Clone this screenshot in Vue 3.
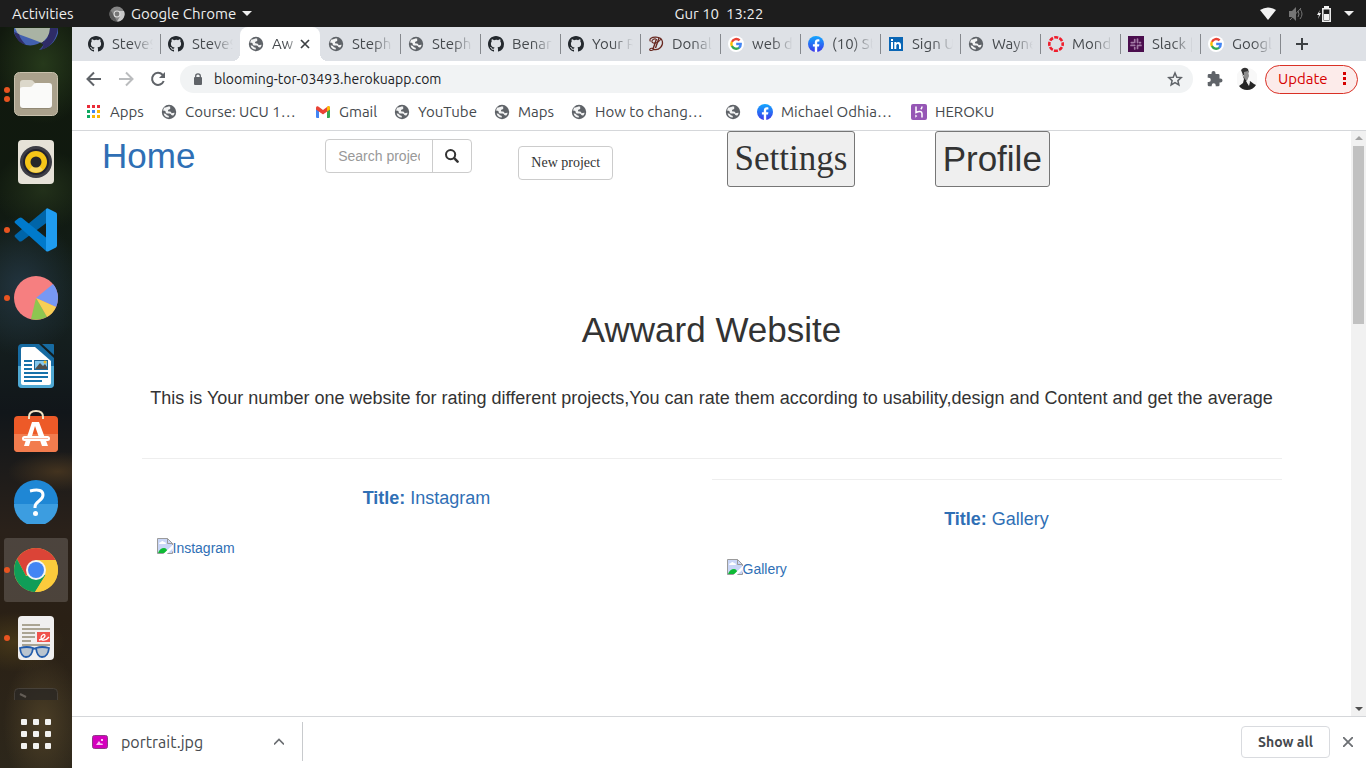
<script setup>
const tabs = [
  { icon: 'github', title: 'Steve9' },
  { icon: 'github', title: 'Steve9' },
  { icon: 'globe', title: 'Aw', active: true },
  { icon: 'globe', title: 'Steph' },
  { icon: 'globe', title: 'Steph' },
  { icon: 'github', title: 'Benar' },
  { icon: 'github', title: 'Your R' },
  { icon: 'script', title: 'Donal' },
  { icon: 'google', title: 'web d' },
  { icon: 'facebook', title: '(10) St' },
  { icon: 'linkedin', title: 'Sign U' },
  { icon: 'globe', title: 'Wayne' },
  { icon: 'canvas', title: 'Mond' },
  { icon: 'slack', title: 'Slack |' },
  { icon: 'google', title: 'Googl' },
]
const bookmarks = [
  { icon: 'apps', title: 'Apps' },
  { icon: 'globe', title: 'Course: UCU 1…' },
  { icon: 'gmail', title: 'Gmail' },
  { icon: 'globe', title: 'YouTube' },
  { icon: 'globe', title: 'Maps' },
  { icon: 'globe', title: 'How to chang…' },
  { icon: 'globe', title: '' },
  { icon: 'facebook', title: 'Michael Odhia…' },
  { icon: 'heroku', title: 'HEROKU' },
]
const launchers = [
  { icon: 'files', label: 'Files', dots: 2 },
  { icon: 'music', label: 'Music', dots: 0 },
  { icon: 'code', label: 'Code editor', dots: 1 },
  { icon: 'pie', label: 'Disk usage', dots: 1 },
  { icon: 'writer', label: 'Writer', dots: 0 },
  { icon: 'store', label: 'Software', dots: 0 },
  { icon: 'help', label: 'Help', dots: 0 },
  { icon: 'chrome', label: 'Google Chrome', dots: 1, active: true },
  { icon: 'viewer', label: 'Document viewer', dots: 1 },
]
const projects = [{ name: 'Instagram' }, { name: 'Gallery' }]
</script>

<template>
  <svg class="sprite" aria-hidden="true">
    <symbol id="github" viewBox="0 0 16 16"><path fill="#24292e" d="M8 0C3.58 0 0 3.58 0 8c0 3.54 2.29 6.53 5.47 7.59.4.07.55-.17.55-.38 0-.19-.01-.82-.01-1.49-2.01.37-2.53-.49-2.69-.94-.09-.23-.48-.94-.82-1.13-.28-.15-.68-.52-.01-.53.63-.01 1.08.58 1.23.82.72 1.21 1.87.87 2.33.66.07-.52.28-.87.51-1.07-1.78-.2-3.64-.89-3.64-3.95 0-.87.31-1.59.82-2.15-.08-.2-.36-1.02.08-2.12 0 0 .67-.21 2.2.82A7.6 7.6 0 0 1 8 3.86c.68 0 1.36.09 2 .27 1.53-1.04 2.2-.82 2.2-.82.44 1.1.16 1.92.08 2.12.51.56.82 1.27.82 2.15 0 3.07-1.87 3.75-3.65 3.95.29.25.54.73.54 1.48 0 1.07-.01 1.93-.01 2.2 0 .21.15.46.55.38A8.01 8.01 0 0 0 16 8c0-4.42-3.58-8-8-8z" /></symbol>
    <symbol id="globe" viewBox="0 0 16 16"><circle cx="8" cy="8" r="7.2" fill="#5f6368" /><path fill="#fff" fill-opacity=".92" d="M9.2 2.5c-.2 1.300.3 1.700 0 2.300-.5.800-2 .7-2.200 1.600-.1.700.3 1.100 1.300 1.100 1.300 0 2.200.7 2.200 1.700 1.100 0 1.800-.5 3.100-.4-.3 1.300-.8 2.200-1.700 3-.6-.8-1.600-.5-1.900-1.300-.3-.7-1-.9-2-.9H6.600c-1.300 0-2-.9-2-1.900 0-.6-.8-.9-1.300-.9H2.300c-.1-1.200.3-2.500 1.100-3.400.7.300 1.800.2 2.500-.3.700-.6 1-.9 3.300-.6zM2.600 9.500c1.300 0 2.600.3 2.900 1.300.4 1 2.200.5 2.300 1.500v1.300C5.200 13.700 3.200 12.200 2.600 9.500z" /></symbol>
    <symbol id="script" viewBox="0 0 16 16"><g fill="none" stroke="#682820"><path stroke-width="1.400" d="M8.500 3 5 13M11 2 7.500 12" /><path stroke-width="1.200" d="M2.500 5.500C.5 2.500 4 1 8 1.200c8 .3 7.500 7.500 4.500 10.300-3 3-6.500 2.600-8 .9-1.300-.4-2.800.1-2.800 1.200 0 1.500 3 1 4.300-.5M8 3C5 2 2 6 5.500 7c3 1 6-2 8-4.500" /></g></symbol>
    <symbol id="google" viewBox="0 0 16 16"><circle cx="8" cy="8" r="8" fill="#fff" /><g fill="none" stroke-width="2.400"><path stroke="#ea4335" d="M3.900 5.900a4.700 4.700 0 0 1 7.700-1.500" /><path stroke="#fbbc05" d="M3.900 10.200a4.700 4.700 0 0 1 0-4.400" /><path stroke="#34a853" d="M3.900 10.100a4.700 4.700 0 0 0 7.300 1.500" /><path stroke="#4285f4" d="M11 11.800A4.700 4.700 0 0 0 12.700 8H8.200" /></g></symbol>
    <symbol id="facebook" viewBox="0 0 16 16"><linearGradient id="fb" x2="0" y2="1"><stop stop-color="#13a7ff" /><stop offset="1" stop-color="#3d38e9" /></linearGradient><circle cx="8" cy="8" r="8" fill="url(#fb)" /><path fill="#fff" d="M6.800 16v-5.400H4.900V8.200h1.900V6.600c0-2.200 1.200-3.400 3-3.400.7 0 1.400.1 1.600.2v2h-1c-1 0-1.200.5-1.200 1.200v1.600h2.200l-.4 2.400H9.200V16z" /></symbol>
    <symbol id="linkedin" viewBox="0 0 16 16"><path fill="#0a66b5" d="M1 1h14v14H1z" /><path fill="#fff" d="M3 6h2v7H3zM3 3h2v2H3zM6.300 6h2v1c1.100-1.700 4.700-1.400 4.700 2v4h-2V9.500c0-2.300-2.700-2-2.700 0V13h-2z" /></symbol>
    <symbol id="canvas" viewBox="0 0 16 16"><circle cx="8" cy="8" r="6.700" fill="none" stroke="#ef1d2c" stroke-width="2.600" stroke-dasharray="4 1.262" stroke-dashoffset="2" /></symbol>
    <symbol id="slack" viewBox="0 0 16 16"><path fill="#4a0d4d" d="M0 0h16v16H0z" /><g stroke="#a27aa5" stroke-width="1.700" stroke-linecap="round"><path d="M6.700 3.500v3M3.300 6.600h2M9.500 3v3.600M12.500 6.600h-1M3 9.400h3.700M6.700 11.500v1.500M9.500 9.400v3M11 9.400h2" /></g></symbol>
    <symbol id="apps" viewBox="0 0 16 16"><path fill="#ea2b38" d="M1 1h3v3H1zM6 1h3v3H6zM11 1h3v3h-3z" /><path fill="#0da960" d="M1 6h3v3H1zM1 11h3v3H1z" /><path fill="#4285f4" d="M6 6h3v3H6z" /><path fill="#fbb605" d="M11 6h3v3h-3zM6 11h3v3H6zM11 11h3v3h-3z" /></symbol>
    <symbol id="gmail" viewBox="0 0 16 16"><path fill="#4285f4" d="M1 4h3v10H2q-1 0-1-1z" /><path fill="#34a853" d="M12 4h3v9q0 1-1 1h-2z" /><path fill="#ea4335" d="M1 4c0-2 2-2 3-1l4 3 4-3c1-1 3-1 3 1v1.500l-7 5-7-5z" /><path fill="#fbbc04" d="m12 3 1-.7c1-.6 2 .3 2 1.700v1.500l-3 2z" /><path fill="#fff" d="m4 8 4 3 4-3v6H4z" /></symbol>
    <symbol id="heroku" viewBox="0 0 16 16"><rect width="16" height="16" rx="2" fill="#9556b5" /><path fill="none" stroke="#fff" stroke-width="1.500" d="M5 2.500v6c3-1.500 6-1.500 6 1v4M11 2.500c0 1.200-.5 2-1.200 2.700" /><path fill="#fff" d="m4.300 10.500 2 1.500-2 1.800z" /></symbol>

    <symbol id="files" viewBox="0 0 44 44"><rect x=".5" y=".5" width="43" height="43" rx="5" fill="#aaa18c" stroke="#c9c1ad" /><path fill="#dcd8cb" d="M6 11q0-3 3-3h8q2 0 3 2l2 2v6H6z" /><path fill="#776f5d" opacity=".5" d="M6 33q0 4 4 4h24q4 0 4-4z" /><path fill="#fafaf9" d="M6 17q0-2 3-2h7q2 0 3-2 1-2 3-2h13q3 0 3 3v19q0 3-3 3H9q-3 0-3-3z" /></symbol>
    <symbol id="music" viewBox="0 0 44 44"><rect x="4" width="36" height="44" rx="4" fill="#e6e2d8" /><circle cx="22" cy="22" r="16" fill="#3d3d45" /><circle cx="22" cy="22" r="13" fill="#22222e" /><circle cx="22" cy="22" r="11" fill="#f5c518" /><path fill="#fff" opacity=".3" d="m22 22-7 8a11 11 0 0 0 14 0z" /><circle cx="22" cy="22" r="5.500" fill="#26262a" /></symbol>
    <symbol id="code" viewBox="0 0 44 44"><path fill="#0065a9" d="M1 27 32 1l3 12L8 33q-2 1-3 0l-4-4q-1-1 0-2z" /><path fill="#007acc" d="M1 15q-1-1 0-2l4-3q2-1 3 0l27 22-3 11z" /><path fill="#1f9cf0" d="M32 1q1-1 2-.6l8 4q1 .6 1 2v31q0 1-1 2l-8 4q-1 .4-2-.4V1z" /></symbol>
    <symbol id="pie" viewBox="0 0 44 44"><circle cx="22" cy="22" r="22" fill="#f67f80" /><path fill="#7798f4" d="M22 22 39 8a22 22 0 0 1 3 23z" /><path fill="#f7cf55" d="m22 22 20 9q-3 7-9 10z" /><path fill="#8dc650" d="m22 22 11 19q-8 4-16 2z" /></symbol>
    <symbol id="writer" viewBox="0 0 44 44"><path fill="#176ba2" d="M8 0h17l15 14v26q0 4-4 4H8q-4 0-4-4V4q0-4 4-4z" /><path fill="#4fa8d3" d="M4 22h36v18q0 4-4 4H8q-4 0-4-4z" /><path fill="#fff" d="M9 3h12l16 14v22q0 2-2 2H9q-2 0-2-2V5q0-2 2-2z" /><path fill="#176ba2" d="M28 0h11q1 0 1 1v10z" /><g fill="#1772aa"><path d="M10 16h8v2h-8zM10 20h8v2h-8zM10 24h8v2h-8zM10 28h24v2H10zM10 32h24v2H10zM10 36h18v2H10z" /></g><path fill="#1c6696" d="M20 16h14v10H20z" /><path fill="#83c7ed" d="M21 17h12v8H21z" /><path fill="#514f4b" d="m21 25 5-6 3 3 2-2 2 3v2z" /><circle cx="31" cy="18" r="1.500" fill="#edba28" /></symbol>
    <symbol id="store" viewBox="0 0 44 44" overflow="visible"><rect y="4" width="44" height="36" rx="4" fill="#ed5a28" /><path fill="#f27c4e" d="M0 22h44v14q0 4-4 4H4q-4 0-4-4z" /><path fill="none" stroke="#f2e3c4" stroke-width="2" d="M15 7V5Q15-1 22-1t7 6v2" /><path fill="#fff" d="M18 10h7l9 24h-6l-7-20-6 20h-5z" /><path stroke="#fff" stroke-width="5" stroke-linecap="round" d="M10.500 26.500h23" /><path stroke="#f8b9a4" d="M10 26.500h24" /></symbol>
    <symbol id="help" viewBox="0 0 44 44"><circle cx="22" cy="22" r="22" fill="#1f87d5" /><path fill="#3c9de0" d="M0 24h44a22 22 0 0 1-44 0z" /><path fill="none" stroke="#fff" stroke-width="3" d="M16 11q13-3 13 4c0 6-8 6-8 12v1" /><circle cx="21.500" cy="33.500" r="2.500" fill="#fff" /></symbol>
    <symbol id="chrome" viewBox="0 0 44 44"><circle cx="22" cy="22" r="22" fill="#fbcb3c" /><path fill="#db4437" d="M3 11a22 22 0 0 1 38 0v1H22L12 28z" /><path fill="#109d58" d="M3 11a22 22 0 0 0 18 33l11-17-10-1-10 2z" /><path fill="#fbcb3c" d="M22 12h19.500A22 22 0 0 1 21 44l11-18z" /><circle cx="22" cy="22" r="10" fill="#f4f4f4" /><circle cx="22" cy="22" r="8" fill="#4285f4" /></symbol>
    <symbol id="viewer" viewBox="0 0 44 44"><rect x="4" width="36" height="44" rx="4" fill="#f0efef" /><path fill="#aaa493" d="M8 8h18v2H8zM8 12h28v2H8zM8 16h13v2H8zM8 20h13v2H8zM8 24h9v2H8zM8 28h28v2H8z" /><path fill="#ef524c" d="M23 16h13v10H23z" /><path fill="none" stroke="#fff" stroke-width="1.300" d="M25 24q5-1 6-4c0-3-4-1-4 2s5 3 8-1" /><g fill="#b9c4cf" stroke="#235cab" stroke-width="1.800"><path d="M6 32q7-2 13 0-1 9-7 9-5 0-6-9zM22 32q6-2 13 0-1 9-7 9-5 0-6-9z" /></g><path fill="none" stroke="#235cab" stroke-width="1.800" d="M19 33q1.500-1 3 0" /></symbol>
    <symbol id="mail" viewBox="0 0 44 44"><path fill="#4260b0" d="M-2 21h47q-2 18-20 22 6-5 5-10-8 7-18 5Q2 34-2 21z" /><path fill="#a9b3a4" d="M1 21h38q-3 7-11 15-10-4-24-9z" /><path fill="#2e2c66" d="M0 25q3 11 12 13-6-6-7-11zM36 21q-1 12-9 15 5 2-1 7 15-3 18-22z" /></symbol>
    <symbol id="terminal" viewBox="0 0 44 44"><rect x=".5" y=".5" width="43" height="43" rx="4" fill="#292725" stroke="#4d4945" /><path fill="none" stroke="#77726f" stroke-width="2" d="m6 6 6 3" /></symbol>
  </svg>

  <div class="desktop">
    <header class="topbar">
      <button class="activities">Activities</button>
      <button class="app-menu">
        <svg class="i16" viewBox="0 0 16 16"><circle cx="8" cy="8" r="7.500" fill="#858585" /><path fill="#c9c9c9" d="M8 5h7A7.500 7.500 0 0 1 8 15.500l3-5z" /><path fill="#5c5c5c" d="m1.500 4 4 6.500L8 15.500A7.500 7.500 0 0 1 1.500 4z" /><circle cx="8" cy="8" r="3.500" fill="#ddd" /><circle cx="8" cy="8" r="2.400" fill="#777" /></svg>
        Google Chrome
        <i class="caret"></i>
      </button>
      <time class="clock">Gur 10&nbsp; 13:22</time>
      <button class="status" aria-label="System menu">
        <svg class="i16" viewBox="0 0 16 16"><path fill="#f2f2f2" d="M0 4Q8-1 16 4L8 14z" /></svg>
        <svg class="i16" viewBox="0 0 16 16"><path fill="#757575" d="M1 5h3l4-4v14l-4-4H1z" /><path fill="none" stroke="#757575" d="m2 14 11-12M10 5q2 3 0 6M12 3q4 5 0 10" /></svg>
        <svg class="i16" viewBox="0 0 16 16"><path fill="#f2f2f2" d="M4 4 1 9h2l-1 4 3-6H3z" /><path fill="none" stroke="#f2f2f2" stroke-width="1.500" d="M6.800 2.800h7.400v12.400H6.800z" /><path fill="#f2f2f2" d="M8 0h5v2H8zM8 8h5v6H8z" /></svg>
        <i class="caret"></i>
      </button>
    </header>

    <nav class="dock" aria-label="Launcher">
      <button class="launcher first" aria-label="Mail"><svg class="i44"><use href="#mail" /></svg></button>
      <button v-for="l in launchers" :key="l.icon" class="launcher" :class="{ active: l.active }" :aria-label="l.label">
        <span class="dots"><i v-for="n in l.dots" :key="n"></i></span>
        <svg class="i44"><use :href="'#' + l.icon" /></svg>
      </button>
      <button class="launcher last" aria-label="Terminal"><svg class="i44"><use href="#terminal" /></svg></button>
      <button class="all-apps" aria-label="Show applications"><i v-for="n in 9" :key="n"></i></button>
    </nav>

    <section class="browser">
      <div class="tabs">
        <div v-for="(t, n) in tabs" :key="n" class="tab" :class="{ active: t.active }">
          <button class="tab-main">
            <svg class="i16"><use :href="'#' + t.icon" /></svg>
            <span class="tab-title">{{ t.title }}</span>
          </button>
          <button v-if="t.active" class="tab-close" aria-label="Close tab"><svg class="i10" viewBox="0 0 10 10"><path stroke="#3c4043" stroke-width="1.700" d="m1 1 8 8M9 1 1 9" /></svg></button>
        </div>
        <button class="new-tab" aria-label="New tab"><svg class="i12" viewBox="0 0 12 12"><path stroke="#3c4043" stroke-width="2" d="M6 0v12M0 6h12" /></svg></button>
      </div>

      <div class="toolbar">
        <button aria-label="Back"><svg class="i16" viewBox="0 0 16 16"><path fill="none" stroke="#5f6368" stroke-width="2" d="M15 8H2M8 1.500 1.500 8 8 14.500" /></svg></button>
        <button aria-label="Forward"><svg class="i16" viewBox="0 0 16 16"><path fill="none" stroke="#babcbe" stroke-width="2" d="M1 8h13M8 1.500 14.500 8 8 14.500" /></svg></button>
        <button aria-label="Reload"><svg class="i16" viewBox="0 0 16 16"><path fill="none" stroke="#5f6368" stroke-width="2" d="M13.700 10A6 6 0 1 1 12.500 3.800L14 5.500" /><path fill="#5f6368" d="M15 1v6H9z" /></svg></button>
        <div class="omnibox">
          <svg class="i12" viewBox="0 0 12 12"><path fill="#5f6368" d="M3 4h6q1 0 1 1v6q0 1-1 1H3q-1 0-1-1V5q0-1 1-1z" /><path fill="none" stroke="#5f6368" stroke-width="1.300" d="M3.700 5V3Q3.700.8 6 .8T8.300 3v2" /></svg>
          <input aria-label="Address" value="blooming-tor-03493.herokuapp.com">
          <button aria-label="Bookmark this page"><svg class="i16" viewBox="0 0 16 16"><path fill="none" stroke="#5f6368" stroke-width="1.500" d="m8 2 1.800 4.200 4.500.4-3.400 3 1 4.400L8 11.700 4.100 14l1-4.400-3.400-3 4.500-.4z" /></svg></button>
        </div>
        <button aria-label="Extensions"><svg class="i16" viewBox="0 0 16 16"><path fill="#5f6368" d="M13.500 7.500h-1V4.300q0-1.300-1.300-1.300H8.500V2a2 2 0 0 0-4 0v1H2Q.7 3 .7 4.300v2.500h1a2 2 0 0 1 0 4.200h-1v3q0 1.300 1.300 1.300h2.700v-1a2 2 0 0 1 4 0v1h2.500q1.300 0 1.300-1.300v-2.500h1a2 2 0 0 0 0-4z" /></svg></button>
        <button class="avatar" aria-label="Profile"><svg class="i20" viewBox="0 0 20 24"><circle cx="10" cy="12" r="11" fill="#f8f8f8" /><path fill="#333" d="M4 3q3-4 7-1l1 4-1-1-2 1-1 3-2-1z" /><path fill="#8e8e8e" d="m7 5 4-1 1 5-2 5-3-3z" /><path fill="#262626" d="m5 7 3 5 2 2 1 3 2-3 4 3 2 1q-3 5-9 5-5 0-8-4l4-3 1-4z" /><path fill="#eee" d="m9 14 3 5 1-4-2-2z" /></svg></button>
        <button class="update">Update <svg viewBox="0 0 4 14" class="kebab"><path fill="#d60000" d="M0 0h3v3H0zM0 5h3v3H0zM0 10h3v3H0z" /></svg></button>
      </div>

      <nav class="bookmarks" aria-label="Bookmarks">
        <a v-for="(b, n) in bookmarks" :key="n" href="#" :aria-label="b.title || 'Untitled'"><svg class="i16"><use :href="'#' + b.icon" /></svg>{{ b.title }}</a>
      </nav>

      <div class="viewport">
        <main class="page">
          <div class="menu">
            <div><a class="home" href="#">Home</a></div>
            <div class="search-cell">
              <form class="search" @submit.prevent>
                <input aria-label="Search projects" placeholder="Search projects">
                <button aria-label="Search"><svg class="i14" viewBox="0 0 14 14"><circle cx="5.600" cy="5.600" r="4.600" fill="none" stroke="#333" stroke-width="2" /><path stroke="#333" stroke-width="2.500" stroke-linecap="round" d="m9.400 9.400 3.200 3.200" /></svg></button>
              </form>
            </div>
            <div><button class="new-project">New project</button></div>
            <div><button class="big serif">Settings</button></div>
            <div><button class="big">Profile</button></div>
          </div>
          <div class="container">
            <h1>Awward Website</h1>
            <p class="intro">This is Your number one website for rating different projects,You can rate them according to usability,design and Content and get the average</p>
            <hr>
            <div class="projects">
              <article v-for="(p, n) in projects" :key="p.name">
                <hr v-if="n > 0">
                <h4><a href="#"><b>Title:</b> {{ p.name }}</a></h4>
                <a class="picture" href="#"><svg class="i16" viewBox="0 0 16 16"><path fill="#c9d6f7" d="M.500.500h10l5 5v10H.500z" /><path fill="#fff" d="M2 6q0-2 2-2 1-2 3 0 2 0 2 2z" /><path fill="#0dba34" d="M1 15q2-5 6-5 3 0 4 5z" /><path fill="none" stroke="#9b9b9b" d="M15.500 7V5.500l-5-5H.500v15h15v-2M10.500.500v5h5" /><path stroke="#fff" stroke-width="2.500" d="M7 17 17 7.500" /></svg>{{ p.name }}</a>
              </article>
            </div>
          </div>
        </main>
        <div class="scrollbar" aria-hidden="true"><i class="arrow up"></i><i class="thumb"></i><i class="arrow down"></i></div>
      </div>

      <footer class="shelf">
        <button class="download">
          <svg class="i16" viewBox="0 0 16 16"><rect x=".5" y="1.500" width="15" height="13" rx="2" fill="#d400bd" stroke="#8b3c84" /><path fill="#fac5f2" d="m4 11 3-4 2 3 1-1 1 2zM9 5h2v2H9z" /></svg>
          <span>portrait.jpg</span>
          <svg class="i10" viewBox="0 0 10 10"><path fill="none" stroke="#6c6f73" stroke-width="1.700" d="m0 7.500 5-5 5 5" /></svg>
        </button>
        <button class="show-all">Show all</button>
        <button class="shelf-close" aria-label="Close downloads"><svg class="i10" viewBox="0 0 10 10"><path stroke="#6c6f73" stroke-width="1.800" d="m0 0 10 10M10 0 0 10" /></svg></button>
      </footer>
    </section>
  </div>
</template>

<style>
body { margin: 0; }
</style>

<style scoped>
* { box-sizing: border-box; }
button { border: 0; padding: 0; background: none; color: inherit; font: inherit; }
a { color: inherit; text-decoration: none; }
svg { display: block; flex: none; }
.sprite { position: absolute; width: 0; height: 0; }
.i10 { width: 10px; height: 10px; }
.i12 { width: 12px; height: 12px; }
.i14 { width: 14px; height: 14px; }
.i16 { width: 16px; height: 16px; }
.i20 { width: 20px; height: 24px; }
.i44 { width: 44px; height: 44px; overflow: visible; }

.desktop { display: grid; grid-template: 27px 1fr / 72px 1fr; height: 100vh; overflow: hidden; background: #fff; font: 15px/20px Ubuntu, "Noto Sans", sans-serif; color: #45494d; }
.topbar { grid-column: 1 / -1; display: grid; grid-template-columns: 72px 1fr auto 1fr; align-items: center; padding: 0 12px; background: #1d1d1d; color: #eee; }
.topbar button { display: flex; align-items: center; }
.app-menu { gap: 6px; margin-left: 25px; justify-self: start; }
.status { gap: 12px; justify-self: end; }
.caret { border: 5px solid transparent; border-top-color: #eee; border-bottom: 0; }

.dock { display: flex; flex-direction: column; min-height: 0; overflow: hidden; background: radial-gradient(50px 60px at 60% 5%, #26391b, transparent), radial-gradient(50px 40px at 60% 22%, #22301a, transparent), radial-gradient(60px 70px at 30% 35%, #22343f, transparent), radial-gradient(40px 70px at 60% 94%, #4b3e26, transparent), radial-gradient(50px 20px at 80% 60%, #43331f, transparent), radial-gradient(50px 30px at 20% 83%, #453719, transparent), linear-gradient(#11190e, #10190f 22%, #15201f 40%, #11161a 52%, #2a211a 68%, #2a2015 80%, #2d271b); }
.launcher { position: relative; display: flex; flex: none; align-items: center; justify-content: center; height: 68px; }
.launcher.active::before { content: ""; position: absolute; inset: 2px 4px; border-radius: 3px; background: #ffffff29; }
.launcher svg { position: relative; }
.dots { position: absolute; left: 4px; display: grid; gap: 3px; }
.dots i { width: 6px; height: 6px; border-radius: 50%; background: #e95420; }
.launcher.first { height: 33px; align-items: flex-end; padding-bottom: 9px; overflow: hidden; }
.launcher.last { height: 28px; align-items: flex-start; padding-top: 16px; overflow: hidden; opacity: .7; }
.all-apps { flex: 1; display: grid; grid-template-columns: repeat(3, 6px); gap: 6px; place-content: center; }
.all-apps i { width: 6px; height: 6px; border-radius: 1px; background: #f2f2f0; }

.browser { display: flex; flex-direction: column; min-width: 0; min-height: 0; }
.tabs { display: flex; flex: none; height: 34px; padding-left: 8px; background: #dee1e6; }
.tab { position: relative; display: flex; align-items: center; flex: 0 1 80px; min-width: 0; padding: 0 7px 0 8px; }
.tab:not(.active)::after { content: ""; position: absolute; right: -1px; top: 7px; width: 1px; height: 20px; background: #85888d; }
.tab:nth-child(2)::after { display: none; }
.tab-main { display: flex; flex: 1; align-items: center; gap: 8px; min-width: 0; }
.tab-title { flex: 1; overflow: hidden; text-align: left; white-space: nowrap; mask-image: linear-gradient(90deg, #000 50%, transparent); }
.tab.active { border-radius: 8px 8px 0 0; background: #fff; }
.tab.active::before { content: ""; position: absolute; left: -8px; right: -8px; bottom: 0; height: 8px; background: radial-gradient(circle at 0 0, transparent 8px, #fff 8px) left / 8px 8px no-repeat, radial-gradient(circle at 100% 0, transparent 8px, #fff 8px) right / 8px 8px no-repeat; }
.tab-close { margin-right: 3px; }
.new-tab { margin-left: 16px; }

.toolbar { display: flex; flex: none; align-items: center; gap: 16px; height: 36px; padding: 0 8px 0 14px; }
.omnibox { flex: 1; display: flex; align-items: center; height: 28px; gap: 10px; padding: 0 10px 0 12px; border-radius: 14px; background: #f1f3f4; }
.omnibox input { flex: 1; min-width: 0; border: 0; padding: 0; background: none; font: inherit; font-size: 14px; color: #202124; outline: 0; }
.toolbar > .omnibox { margin-left: -2px; margin-right: -2px; }
.avatar { margin: 0 -8px 0 -2px; }
.update { display: flex; align-items: center; justify-content: space-between; width: 93px; height: 29px; padding: 0 10px 0 12px; border: 1px solid #d93025; border-radius: 15px; background: #fcebea; color: #d60000; }
.kebab { width: 4px; height: 14px; }

.bookmarks { display: grid; grid-template-columns: 75px 154px 79px 100px 77px 154px 32px 154px auto; align-items: center; height: 34px; flex: none; padding: 0 0 4px 14px; border-bottom: 1px solid #d5d7da; white-space: nowrap; }
.bookmarks a { display: flex; align-items: center; gap: 8px; }

.viewport { flex: 1; display: flex; min-height: 0; }
.page { flex: 1; min-width: 0; overflow: hidden; padding: 0 15px; font: 14px/20px "Liberation Sans", Arial, sans-serif; color: #333; }
.page a { color: #2f6fb5; }
.menu { display: grid; grid-template-columns: repeat(6, 1fr); height: 56px; }
.menu > div { padding: 0 15px; }
.menu .home { display: block; font-size: 35px; line-height: 50px; }
.menu .search-cell { padding: 8px 30px; }
.search { display: flex; width: 147px; height: 34px; border: 1px solid #ccc; border-radius: 4px; }
.search input { flex: 1; min-width: 0; border: 0; padding: 0 12px; background: none; font: inherit; outline: 0; }
.search input::placeholder { color: #999; }
.search button { display: grid; place-items: center; width: 39px; border-left: 1px solid #ccc; }
.new-project { height: 34px; margin-top: 15px; padding: 0 12px; border: 1px solid #ccc; border-radius: 4px; font-family: "Liberation Serif", serif; }
.big { height: 56px; padding: 0 7px; border: 1px solid #767676; border-radius: 3px; background: #efefef; font-size: 35px; }
.serif { font-family: "Liberation Serif", serif; }
.container { max-width: 1140px; margin: 0 auto; }
h1 { margin: 123px 0 0; font-size: 35px; font-weight: 400; line-height: 40px; text-align: center; }
.intro { margin: 38px 0 50px; font-size: 18px; line-height: 20px; text-align: center; }
hr { margin: 0; border: 0; border-top: 1px solid #eee; }
.projects { display: grid; grid-template-columns: 1fr 1fr; }
article > hr { margin-top: 20px; }
h4 { margin: 29px 0 30px; font-size: 18px; font-weight: 400; line-height: 20px; text-align: center; }
.picture { display: flex; margin-left: 15px; }

.scrollbar { display: flex; flex-direction: column; align-items: center; width: 15px; padding: 5px 0; background: #f1f1f1; }
.arrow { border: 4px solid transparent; }
.up { border-top: 0; border-bottom-color: #a3a3a3; }
.down { margin-top: auto; border-bottom: 0; border-top-color: #505050; }
.thumb { width: 11px; height: 31%; margin-top: 6px; background: #c1c1c1; }

.shelf { display: flex; flex: none; align-items: center; height: 52px; padding: 0 13px 2px 20px; border-top: 1px solid #d5d7da; }
.download { display: flex; align-items: center; width: 211px; height: 39px; padding-right: 18px; border-right: 1px solid #c8cacd; font-size: 16px; text-align: left; }
.download span { flex: 1; margin-left: 13px; }
.show-all { width: 89px; height: 32px; margin-left: auto; border: 1px solid #d9dbdf; border-radius: 4px; font-size: 14px; font-weight: 600; }
.shelf-close { margin-left: 13px; }
</style>
